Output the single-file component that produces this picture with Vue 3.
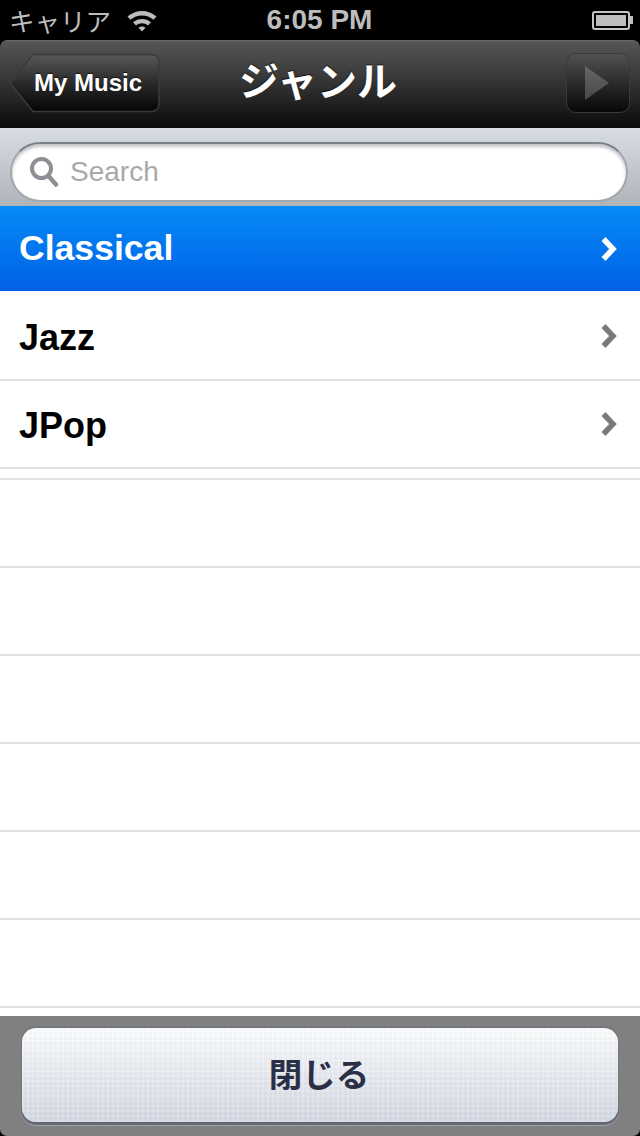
<script setup>
const genres = [
  { name: 'Classical', active: true },
  { name: 'Jazz', active: false },
  { name: 'JPop', active: false },
]
const emptyRows = [1, 2, 3, 4, 5, 6]
</script>

<template>
  <div class="screen">
    <div class="status-bar">
      <div class="status-left">
        <span class="carrier">キャリア</span>
        <svg class="wifi" width="32" height="24" viewBox="0 0 32 24">
          <path d="M1.5 8.5C9.5 1 22.5 1 30.5 8.5L27.5 11.8C21 6 11 6 4.5 11.8Z" fill="#bdbdbd" />
          <path d="M7 14.3C12 9.8 20 9.8 25 14.3L22 17.5C18.5 14.5 13.5 14.5 10 17.5Z" fill="#bdbdbd" />
          <path d="M12.5 19.8C14.5 18.2 17.5 18.2 19.5 19.8L16 23.5Z" fill="#bdbdbd" />
        </svg>
      </div>
      <span class="time">6:05 PM</span>
      <div class="status-right">
        <div class="battery"><div class="battery-fill"></div></div>
        <div class="battery-tip"></div>
      </div>
    </div>

    <div class="nav-bar">
      <div class="nav-left">
        <button class="back-btn">
          <svg class="back-shape" width="151" height="60" viewBox="0 0 151 60">
            <defs>
              <linearGradient id="backFill" x1="0" y1="0" x2="0" y2="1">
                <stop offset="0" stop-color="#585858" />
                <stop offset="0.5" stop-color="#2a2a2a" />
                <stop offset="1" stop-color="#050505" />
              </linearGradient>
            </defs>
            <path d="M1 30L24 1.5H142Q150 1.5 150 9.5V50.5Q150 58.5 142 58.5H24Z" fill="url(#backFill)" stroke="#3a3a3a" stroke-width="1.5" />
          </svg>
          <span class="back-label">My Music</span>
        </button>
      </div>
      <h1 class="nav-title">ジャンル</h1>
      <div class="nav-right">
        <button class="play-btn">
          <svg width="24" height="34" viewBox="0 0 24 34">
            <defs>
              <linearGradient id="playFill" x1="0" y1="0" x2="0" y2="1">
                <stop offset="0" stop-color="#666" />
                <stop offset="1" stop-color="#484848" />
              </linearGradient>
            </defs>
            <path d="M0 0L24 17L0 34Z" fill="url(#playFill)" />
          </svg>
        </button>
      </div>
    </div>

    <div class="search-bar">
      <div class="search-field">
        <svg class="search-icon" width="30" height="32" viewBox="0 0 30 32">
          <circle cx="12.5" cy="12.5" r="9.5" fill="none" stroke="#8c9094" stroke-width="4" />
          <path d="M19.5 20L27 28.5" stroke="#8c9094" stroke-width="4.5" stroke-linecap="round" />
        </svg>
        <span class="search-placeholder">Search</span>
      </div>
    </div>

    <ul class="list">
      <li v-for="g in genres" :key="g.name" class="row" :class="{ active: g.active }">
        <span class="row-name">{{ g.name }}</span>
        <svg class="chevron" width="18" height="26" viewBox="0 0 18 26">
          <path d="M3.5 3L13 13L3.5 23" fill="none" :stroke="g.active ? '#ffffff' : '#7a7a7a'" stroke-width="5.5" />
        </svg>
      </li>
      <li class="spacer"></li>
      <li v-for="n in emptyRows" :key="n" class="row-empty"></li>
    </ul>

    <div class="footer">
      <button class="close-btn">閉じる</button>
    </div>
  </div>
</template>

<style scoped>
.screen {
  width: 640px;
  height: 1136px;
  background: #000;
  display: flex;
  flex-direction: column;
  overflow: hidden;
  font-family: "Liberation Sans", "Noto Sans CJK JP", sans-serif;
}

.status-bar {
  height: 40px;
  flex: none;
  display: grid;
  grid-template-columns: 1fr auto 1fr;
  align-items: center;
  padding: 0 7px 0 9px;
  box-sizing: border-box;
  color: #bdbdbd;
}
.status-left {
  display: flex;
  align-items: center;
  gap: 15px;
}
.carrier {
  font-family: "Noto Sans CJK JP", sans-serif;
  font-size: 25.5px;
  line-height: 38px;
}
.wifi {
  margin-top: -1px;
}
.time {
  font-size: 28px;
  font-weight: bold;
  margin-left: -3px;
}
.status-right {
  display: flex;
  align-items: center;
  justify-content: flex-end;
}
.battery {
  width: 38px;
  height: 19px;
  border: 2px solid #c4c4c4;
  border-radius: 3px;
  padding: 2px;
  box-sizing: border-box;
}
.battery-fill {
  height: 100%;
  background: #bdbdbd;
}
.battery-tip {
  width: 3px;
  height: 8px;
  background: #bdbdbd;
}

.nav-bar {
  height: 88px;
  flex: none;
  display: grid;
  grid-template-columns: 1fr auto 1fr;
  align-items: center;
  padding: 0 10px 2px 9px;
  box-sizing: border-box;
  background: linear-gradient(#6b6b6b 0, #555 2px, #3a3a3a 40%, #0a0a0a 100%);
  border-radius: 7px 7px 0 0;
}
.nav-left {
  display: flex;
}
.nav-right {
  display: flex;
  justify-content: flex-end;
}
.back-btn {
  position: relative;
  width: 151px;
  height: 60px;
  padding: 0 0 0 25px;
  border: none;
  background: none;
  display: flex;
  align-items: center;
  font: inherit;
}
.back-shape {
  position: absolute;
  left: 0;
  top: 0;
}
.back-label {
  position: relative;
  color: #fff;
  font-size: 24px;
  font-weight: bold;
  white-space: nowrap;
  text-shadow: 0 -1px 1px rgba(0, 0, 0, 0.7);
}
.nav-title {
  margin: -8px 0 0 -3px;
  color: #fff;
  font-family: "Noto Sans CJK JP", sans-serif;
  font-size: 40px;
  font-weight: 700;
  line-height: 60px;
  text-shadow: 0 -1px 1px rgba(0, 0, 0, 0.7);
}
.play-btn {
  width: 64px;
  height: 60px;
  padding: 0 2px 0 0;
  border: 1.5px solid #3a3a3a;
  border-radius: 10px;
  box-sizing: border-box;
  background: linear-gradient(#515151, #2b2b2b 50%, #070707);
  display: flex;
  align-items: center;
  justify-content: center;
}

.search-bar {
  height: 78px;
  flex: none;
  box-sizing: border-box;
  padding: 14px 12px 4px 10px;
  background: linear-gradient(#d8dde3, #aeb4ba);
}
.search-field {
  height: 60px;
  box-sizing: border-box;
  border-radius: 30px;
  background: #fff;
  border: 2px solid #a3a8ae;
  border-top-color: #7b828b;
  box-shadow: inset 0 3px 3px rgba(90, 95, 105, 0.35);
  display: flex;
  align-items: center;
  padding-left: 17px;
  gap: 11px;
}
.search-placeholder {
  font-size: 28px;
  color: #a9a9a9;
}

.list {
  list-style: none;
  margin: 0;
  padding: 0;
  flex: 1;
  min-height: 0;
  background: #fff;
  overflow: hidden;
}
.row {
  height: 88px;
  box-sizing: border-box;
  border-bottom: 2px solid #e0e0e0;
  display: flex;
  align-items: center;
  justify-content: space-between;
  padding: 0 22px 0 19px;
  color: #000;
}
.row.active {
  height: 85px;
  margin-bottom: 2px;
  border-bottom: none;
  color: #fff;
  background: linear-gradient(#058bf6, #0160e5);
}
.row-name {
  font-size: 36px;
  font-weight: bold;
  margin-top: 3px;
}
.row.active .row-name {
  font-size: 35.6px;
  margin-top: 0;
}
.chevron {
  display: block;
}
.spacer {
  height: 11px;
  box-sizing: border-box;
  border-bottom: 2px solid #e4e4e4;
}
.row-empty {
  height: 88px;
  box-sizing: border-box;
  border-bottom: 2px solid #e0e0e0;
}

.footer {
  height: 120px;
  flex: none;
  box-sizing: border-box;
  padding: 12px 22px 14px;
  background: #808080;
  border-radius: 0 0 7px 7px;
}
.close-btn {
  display: block;
  width: 100%;
  height: 94px;
  padding: 0 2px 6px 0;
  border: none;
  border-radius: 14px;
  color: #2b2f45;
  font-family: "Noto Sans CJK JP", sans-serif;
  font-size: 33.5px;
  font-weight: 700;
  background:
    repeating-linear-gradient(90deg, rgba(255, 255, 255, 0.12) 0 2px, rgba(150, 160, 175, 0.04) 2px 5px),
    repeating-linear-gradient(0deg, rgba(255, 255, 255, 0.08) 0 2px, rgba(150, 160, 175, 0.04) 2px 5px),
    linear-gradient(#fcfdfd, #e8ebf0 45%, #d3d7e1);
  box-shadow: 0 -1px 0 1px #73777c, 0 2px 0 1px #646973, 0 3px 0 1px #a0a5ac;
}
</style>

<style>
html, body {
  margin: 0;
  background: #000;
}
</style>
